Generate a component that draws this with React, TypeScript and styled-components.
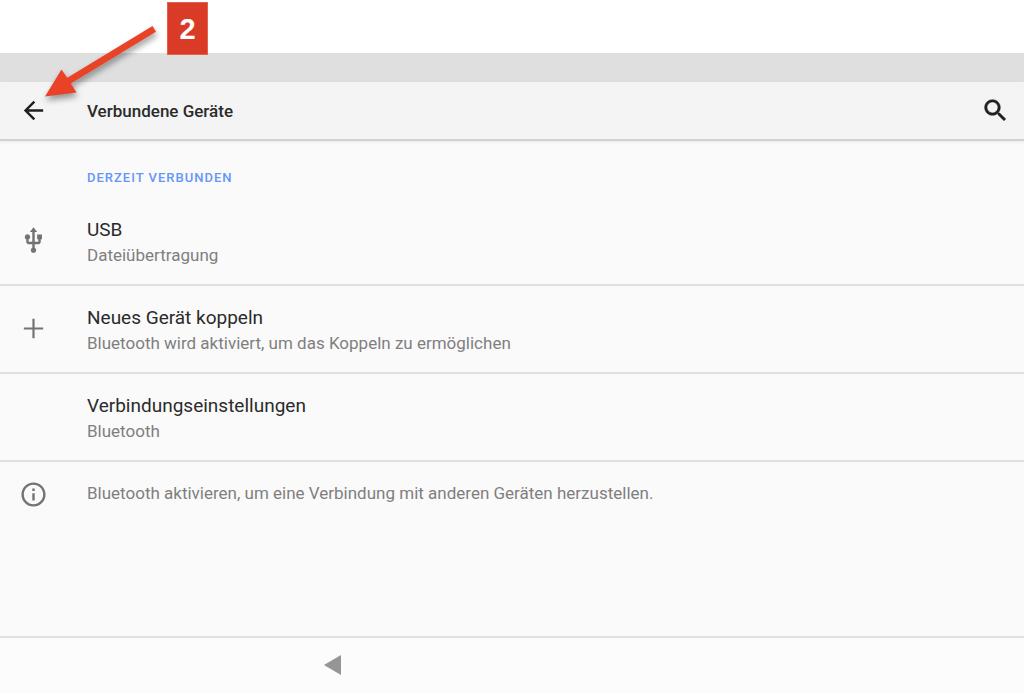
import React from "react";
import styled, { createGlobalStyle } from "styled-components";

const GlobalStyle = createGlobalStyle`
  *, *::before, *::after { box-sizing: border-box; }
  body {
    margin: 0;
    background: #fafafa;
    color: #2b2b2b;
    font-family: Roboto, "Noto Sans", sans-serif;
  }
`;

const Screen = styled.div`
  position: relative;
  display: flex;
  flex-direction: column;
  min-height: 100vh;
`;

const TopMargin = styled.div`
  height: 53px;
  background: #ffffff;
`;

const StatusBar = styled.div`
  height: 29px;
  background: #dfdfdf;
`;

const AppBar = styled.header`
  display: flex;
  align-items: center;
  gap: 39px;
  height: 59px;
  padding: 0 14px 0 19px;
  background: #f4f4f4;
  border-bottom: 2px solid #d0d0d2;
  box-shadow: 0 1px 3px rgba(0, 0, 0, 0.07);
`;

const Title = styled.h1`
  flex: 1;
  margin: 0;
  font-size: 17px;
  line-height: 24px;
  font-weight: 500;
`;

const IconButton = styled.button`
  display: flex;
  padding: 0;
  border: 0;
  background: none;
  color: #1f1f1f;
  cursor: pointer;
`;

const Icon = styled.svg<{ $heavy?: boolean }>`
  display: block;
  flex: none;
  width: 29px;
  height: 29px;
  fill: currentColor;
  stroke: ${({ $heavy }) => ($heavy ? "currentColor" : "none")};
  stroke-width: 0.4;
`;

const Content = styled.main`
  flex: 1;
`;

const Category = styled.h2`
  margin: 0;
  padding: 25px 19px 8px 87px;
  color: #6596f8;
  font-size: 13px;
  line-height: 24px;
  font-weight: 500;
  letter-spacing: 1px;
  text-transform: uppercase;
`;

const List = styled.ul`
  margin: 0;
  padding: 0;
  list-style: none;
`;

const ListItem = styled.li`
  border-bottom: 2px solid #dfdfe2;
`;

const Row = styled.button`
  display: flex;
  align-items: center;
  gap: 39px;
  width: 100%;
  padding: 15px 19px 17px;
  border: 0;
  background: none;
  color: #737373;
  font-family: inherit;
  text-align: left;
  cursor: pointer;
`;

const IconSlot = styled.span`
  flex: none;
  width: 29px;
`;

const Labels = styled.span`
  display: flex;
  flex-direction: column;
  padding-top: 4px;
`;

const Primary = styled.span`
  color: #2b2b2b;
  font-size: 19px;
  line-height: 26px;
`;

const Secondary = styled.span`
  color: #7f7f7f;
  font-size: 17px;
  line-height: 24px;
`;

const Footnote = styled.div`
  display: flex;
  align-items: center;
  gap: 39px;
  padding: 18px 19px;
  color: #737373;
`;

const FootnoteText = styled.p`
  margin: 0;
  padding-bottom: 4px;
  color: #7f7f7f;
  font-size: 17px;
  line-height: 24px;
`;

const NavBar = styled.nav`
  display: flex;
  align-items: center;
  height: 57px;
  padding: 0 0 2px 324px;
  background: #fcfcfc;
  border-top: 2px solid #e0e0e0;
`;

const NavButton = styled(IconButton)`
  color: #959595;
`;

const BackTriangle = styled.svg`
  display: block;
  width: 18px;
  height: 20px;
  fill: currentColor;
`;

const Pointer = styled.svg`
  position: absolute;
  top: 0;
  left: 0;
  width: 180px;
  height: 120px;
  fill: #ea4227;
  filter: drop-shadow(1px 4px 3px rgba(0, 0, 0, 0.4));
  pointer-events: none;
`;

const StepBadge = styled.div`
  position: absolute;
  top: 2px;
  left: 167px;
  display: flex;
  align-items: center;
  justify-content: center;
  width: 41px;
  height: 53px;
  background: #d93b27;
  border: 1px solid #e4604f;
  color: #ffffff;
  font-family: "Liberation Sans", Arial, sans-serif;
  font-size: 29px;
  line-height: 32px;
  font-weight: 700;
`;

const paths = {
  back: "M20 11H7.83l5.59-5.59L12 4l-8 8 8 8 1.41-1.41L7.83 13H20v-2z",
  search:
    "M15.5 14h-.79l-.28-.27C15.41 12.59 16 11.11 16 9.5 16 5.91 13.09 3 9.5 3S3 5.91 3 9.5 5.91 16 9.5 16c1.61 0 3.09-.59 4.23-1.57l.27.28v.79l5 4.99L20.49 19l-4.99-5zm-6 0C7.01 14 5 11.99 5 9.5S7.01 5 9.5 5 14 7.01 14 9.5 11.99 14 9.5 14z",
  usb: "M15 7v4h1v2h-3V5h2l-3-4-3 4h2v8H8v-2.07c.7-.37 1.2-1.08 1.2-1.93 0-1.21-.99-2.2-2.2-2.2-1.21 0-2.2.99-2.2 2.2 0 .85.5 1.56 1.2 1.93V13c0 1.11.89 2 2 2h3v3.05c-.71.37-1.2 1.1-1.2 1.95 0 1.22.99 2.2 2.2 2.2 1.21 0 2.2-.98 2.2-2.2 0-.85-.49-1.58-1.2-1.95V15h3c1.11 0 2-.89 2-2v-2h1V7h-4z",
  add: "M20 12.900h-7.100V20h-1.800v-7.100H4v-1.800h7.100V4h1.800v7.100H20z",
  info: "M11 7h2v2h-2zm0 4h2v6h-2zm1-9C6.48 2 2 6.48 2 12s4.48 10 10 10 10-4.48 10-10S17.52 2 12 2zm0 18c-4.41 0-8-3.59-8-8s3.59-8 8-8 8 3.59 8 8-3.59 8-8 8z",
};

function Glyph({ name, heavy }: { name: keyof typeof paths; heavy?: boolean }) {
  return (
    <Icon viewBox="0 0 24 24" aria-hidden="true" $heavy={heavy}>
      <path d={paths[name]} />
    </Icon>
  );
}

const items: { icon?: keyof typeof paths; title: string; summary: string }[] = [
  { icon: "usb", title: "USB", summary: "Dateiübertragung" },
  {
    icon: "add",
    title: "Neues Gerät koppeln",
    summary: "Bluetooth wird aktiviert, um das Koppeln zu ermöglichen",
  },
  { title: "Verbindungseinstellungen", summary: "Bluetooth" },
];

export default function App() {
  return (
    <Screen>
      <GlobalStyle />
      <TopMargin />
      <StatusBar />
      <AppBar>
        <IconButton type="button" aria-label="Zurück">
          <Glyph name="back" />
        </IconButton>
        <Title>Verbundene Geräte</Title>
        <IconButton type="button" aria-label="Suchen">
          <Glyph name="search" heavy />
        </IconButton>
      </AppBar>
      <Content>
        <Category>Derzeit verbunden</Category>
        <List>
          {items.map((item) => (
            <ListItem key={item.title}>
              <Row type="button">
                <IconSlot>{item.icon && <Glyph name={item.icon} />}</IconSlot>
                <Labels>
                  <Primary>{item.title}</Primary>
                  <Secondary>{item.summary}</Secondary>
                </Labels>
              </Row>
            </ListItem>
          ))}
        </List>
        <Footnote>
          <Glyph name="info" />
          <FootnoteText>
            Bluetooth aktivieren, um eine Verbindung mit anderen Geräten herzustellen.
          </FootnoteText>
        </Footnote>
      </Content>
      <NavBar>
        <NavButton type="button" aria-label="Zurück">
          <BackTriangle viewBox="0 0 18 20" aria-hidden="true">
            <path d="M0 10 17 0v20z" />
          </BackTriangle>
        </NavButton>
      </NavBar>
      <Pointer viewBox="0 0 180 120" aria-hidden="true">
        <path d="M45 96.500 61.500 69.500 67.300 77.800 152.500 26 156 31.700 70.800 83.500 76.500 92.500z" />
      </Pointer>
      <StepBadge>2</StepBadge>
    </Screen>
  );
}
